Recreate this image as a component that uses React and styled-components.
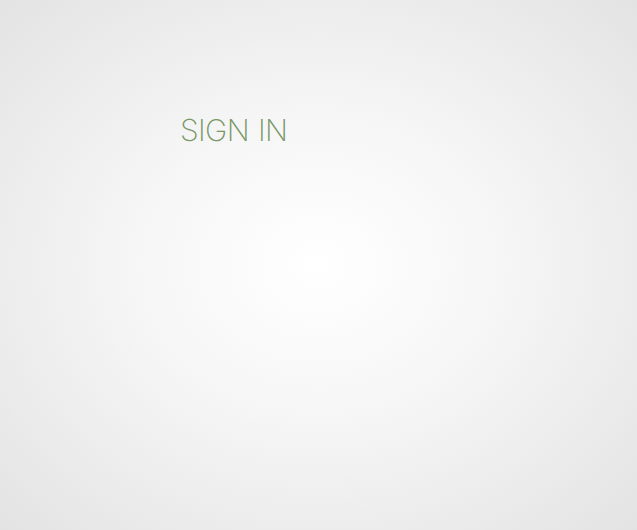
import React from "react";
import styled, { createGlobalStyle } from "styled-components";

const GlobalStyle = createGlobalStyle`
  html, body {
    margin: 0;
    padding: 0;
    height: 100%;
  }
  #root {
    height: 100%;
  }
`;

const Page = styled.div`
  min-height: 100vh;
  box-sizing: border-box;
  background: radial-gradient(ellipse at 50% 50%, #ffffff 0%, #f6f6f6 40%, #e3e3e3 100%);
  padding: 112px 0 0 180px;
`;

const Title = styled.h1`
  margin: 0;
  font-family: Inter, "Liberation Sans", sans-serif;
  font-weight: 150;
  font-size: 30px;
  line-height: 36px;
  color: #779766;
  letter-spacing: -0.6px;
  word-spacing: 1px;
`;

export default function App() {
  return (
    <>
      <GlobalStyle />
      <Page>
        <Title>SIGN IN</Title>
      </Page>
    </>
  );
}
